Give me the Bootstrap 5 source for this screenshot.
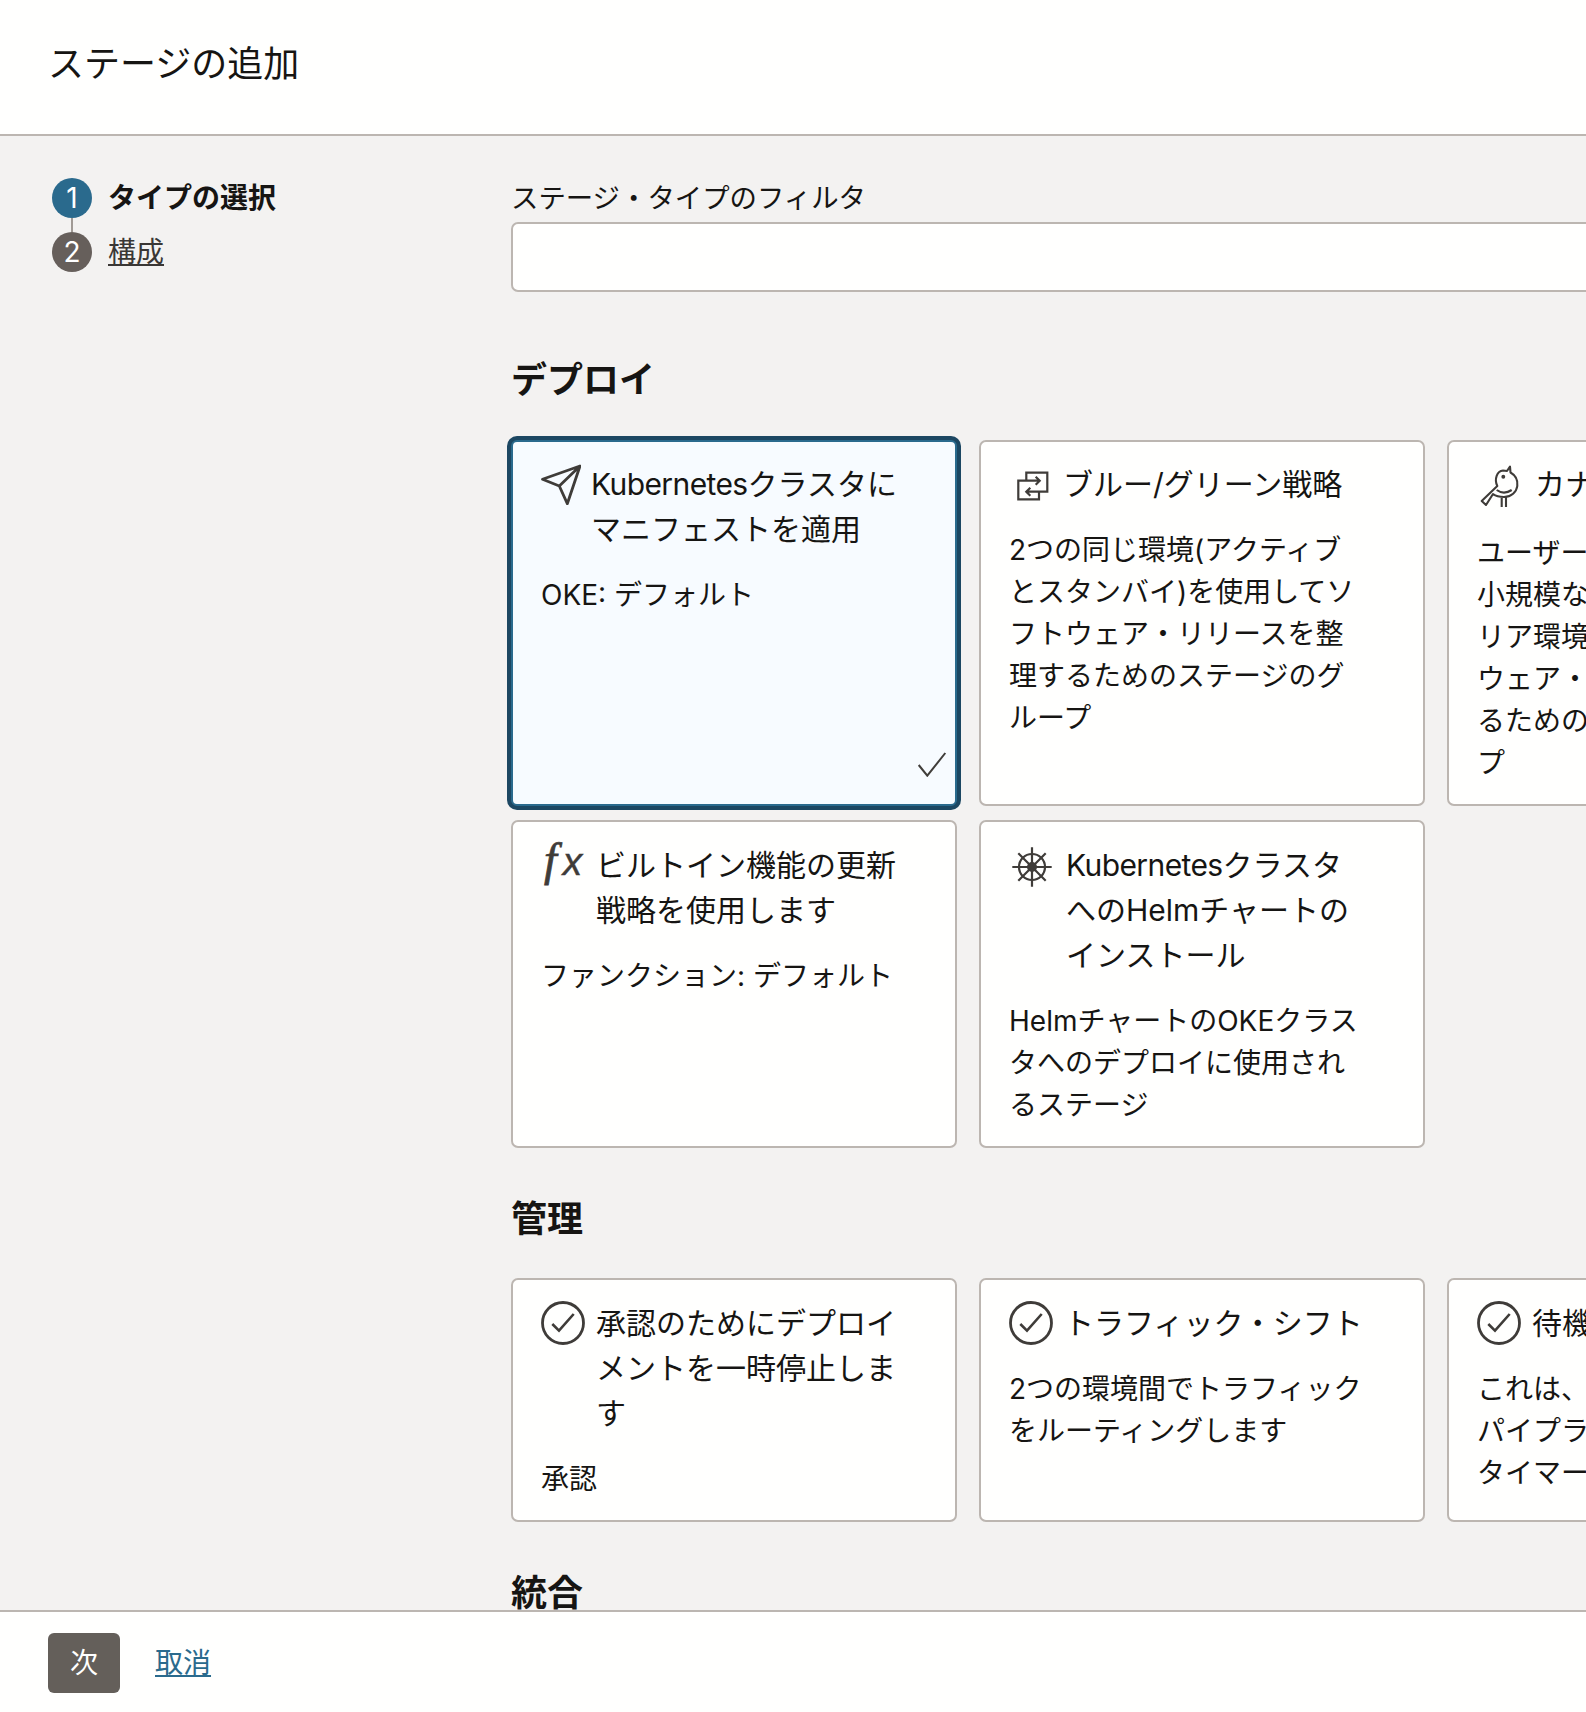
<!DOCTYPE html>
<html lang="ja">
<head>
<meta charset="utf-8">
<title>ステージの追加</title>
<link rel="stylesheet" href="https://cdn.jsdelivr.net/npm/bootstrap@5.3.0/dist/css/bootstrap.min.css">
<style>
html,body{height:100%;}
body{font-family:Inter,"Noto Sans CJK JP",sans-serif;font-weight:400;color:#161513;background:#f3f2f1;font-size:28px;line-height:42px;overflow:hidden;}
.app-shell{height:1712px;}
.page-head{height:136px;background:#fffffe;border-bottom:2px solid #bcb6b1;padding:0 48px 6px;flex-shrink:0;}
.page-head h1{font-size:36px;font-weight:400;margin:0;line-height:46px;}
.page-body{min-height:0;overflow:hidden;}
.side-steps{width:495px;flex-shrink:0;padding:42px 0 0 52px;}
.step-dot{width:40px;height:40px;color:#fff;font-size:28px;flex-shrink:0;}
.dot-on{background:#2a6a8d;}
.dot-off{background:#665f5b;}
.step-line{width:2px;height:14px;background:#a09a95;margin-left:19px;}
.step-text{margin-left:16px;line-height:40px;}
.step-text a{color:#3a3735;}
.step-now{font-weight:700;}
.main-col{min-width:0;padding:40px 0 0 16px;overflow:hidden;}
.filter-label{display:block;margin:0 0 4px;line-height:42px;font-size:27.4px;padding-top:1px;margin-bottom:3px;}
.filter-input{width:1400px;height:70px;border:2px solid #bcb6b1;border-radius:7px;background:#fffffe;margin-bottom:64px;}
.group-title{font-size:36px;font-weight:700;line-height:48px;margin:0 0 36px;}
.group-next{margin-top:47px;margin-bottom:35px;}
.stage-grid{display:grid;grid-template-columns:repeat(3,446px);column-gap:22px;row-gap:14px;}
.stage-card{background:#fffffe;border:2px solid #bcb6b1;border-radius:7px;padding:20px 28px;white-space:nowrap;}
.card-lift{padding-top:21px;}
.stage-on{background:#f7fbff;border-color:#2a6a8d;box-shadow:0 0 0 4px #1c4762;border-radius:6px;}
.stage-head{display:flex;font-size:30px;line-height:45px;margin-bottom:22px;}
.head-tall{margin-bottom:24px;}
.kube-word{letter-spacing:-.6px;}
.slot{flex-shrink:0;color:#3f3c39;}
.slot svg{display:block;fill:none;stroke:currentColor;}
.slot-send{width:50px;padding-top:2px;}
.slot-swap{width:54px;padding:9px 0 0 8px;}
.slot-bird{width:58px;padding:3px 0 0 3px;}
.slot-fx{width:55px;display:flex;align-items:baseline;margin-top:-6px;line-height:45px;font-style:italic;font-weight:400;}
.fx-f{font-family:"Liberation Serif",serif;font-size:46px;margin-left:3px;-webkit-text-stroke:.8px currentColor;}
.fx-x{font-family:"Liberation Sans",sans-serif;font-size:39px;margin-left:6px;-webkit-text-stroke:.4px currentColor;}
.slot-helm{width:57px;padding:4px 0 0 3px;}
.slot-check{width:55px;}
.done-mark{position:absolute;right:8.5px;bottom:27px;color:#403d3a;fill:none;stroke:currentColor;}
.page-foot{height:102px;background:#fffffe;border-top:2px solid #bcb6b1;padding:21px 48px 0;flex-shrink:0;}
.next-btn{width:72px;height:60px;background:#645f5a;border:0;border-radius:6px;color:#fff;font-size:28px;font-weight:400;padding:0;}
.next-btn:hover{background:#645f5a;color:#fff;}
.cancel-link{color:#2a6a8d;margin-left:35px;line-height:60px;}
</style>
</head>
<body>
<div class="app-shell d-flex flex-column">
  <header class="page-head d-flex align-items-center"><h1>ステージの追加</h1></header>
  <div class="page-body d-flex flex-grow-1">
    <nav class="side-steps">
      <div class="d-flex align-items-center">
        <span class="step-dot dot-on rounded-circle d-flex align-items-center justify-content-center">1</span>
        <span class="step-text step-now">タイプの選択</span>
      </div>
      <div class="step-line"></div>
      <div class="d-flex align-items-center">
        <span class="step-dot dot-off rounded-circle d-flex align-items-center justify-content-center">2</span>
        <span class="step-text"><a href="#">構成</a></span>
      </div>
    </nav>
    <main class="main-col flex-grow-1">
      <label class="filter-label" for="flt">ステージ・タイプのフィルタ</label>
      <input id="flt" class="form-control filter-input" type="text">

      <h2 class="group-title">デプロイ</h2>
      <div class="stage-grid">
        <div class="card stage-card stage-on">
          <div class="stage-head">
            <span class="slot slot-send"><svg width="40" height="41" viewBox="0 0 40 41" stroke-width="2.800" stroke-linejoin="round"><path d="M39 2 1.500 15.300l16.800 6.700 8 17.700zM39 2 18.300 22"/></svg></span>
            <span><span class="kube-word">Kubernetes</span>クラスタに<br>マニフェストを適用</span>
          </div>
          <div>OKE: デフォルト</div>
          <svg class="done-mark" width="30" height="26" viewBox="0 0 30 26" stroke-width="2"><path d="M1.700 14l8.600 10.700L28.300 2"/></svg>
        </div>
        <div class="card stage-card">
          <div class="stage-head">
            <span class="slot slot-swap"><svg width="32" height="30" viewBox="0 0 32 30" stroke-width="2.200"><path d="M9.300 9.700V1.700h21v19H22M22 20.700v7.600H1.300V9.700h8M9.300 9.700h13.400M18.700 5.700l4 4-4 4M22 20.700H9.300M13.300 16.700l-4 4 4 4"/></svg></span>
            <span>ブルー/グリーン戦略</span>
          </div>
          <div>2つの同じ環境(アクティブ<br>とスタンバイ)を使用してソ<br>フトウェア・リリースを整<br>理するためのステージのグ<br>ループ</div>
        </div>
        <div class="card stage-card">
          <div class="stage-head head-tall">
            <span class="slot slot-bird"><svg width="40" height="43" viewBox="0 0 40 43" stroke-width="2.100" stroke-linejoin="round"><path d="M17.300 21C14 14 17 6 23 5.500l4 .5 3-4.500.5 6C35 10 38 15 37.300 21c-.8 6-6 11-13.300 11-4.500 0-8-.8-11-3l-7 11-4.300-4zM16.700 25c4.500 3.300 10 3.300 15 0M21.700 32v10M26 32v10"/><circle cx="23.300" cy="11.700" r=".9"/></svg></span>
            <span>カナリア戦略</span>
          </div>
          <div>ユーザーのサブセットを<br>小規模なカナリア環境で<br>リア環境でソフトウェア<br>ウェア・リリースを評価す<br>るためのステージのグルー<br>プ</div>
        </div>
        <div class="card stage-card card-lift">
          <div class="stage-head">
            <span class="slot slot-fx"><span class="fx-f">f</span><span class="fx-x">x</span></span>
            <span>ビルトイン機能の更新<br>戦略を使用します</span>
          </div>
          <div>ファンクション: デフォルト</div>
        </div>
        <div class="card stage-card card-lift">
          <div class="stage-head">
            <span class="slot slot-helm"><svg width="40" height="40" viewBox="0 0 40 40" stroke-width="2.200"><circle cx="20" cy="20" r="13"/><path d="M.3 20h39.400M20 .3v39.400M6.300 6.300l27.400 27.400M33.700 6.300 6.300 33.700"/><circle cx="20" cy="20" r="3.500" stroke-width="3"/></svg></span>
            <span><span class="kube-word">Kubernetes</span>クラスタ<br>へのHelmチャートの<br>インストール</span>
          </div>
          <div>HelmチャートのOKEクラス<br>タへのデプロイに使用され<br>るステージ</div>
        </div>
      </div>

      <h2 class="group-title group-next">管理</h2>
      <div class="stage-grid">
        <div class="card stage-card card-lift">
          <div class="stage-head">
            <span class="slot slot-check"><svg width="44" height="44" viewBox="0 0 44 44" stroke-width="2.800"><circle cx="22" cy="22" r="20.500"/><path d="M11.300 23l6.700 6.700L32.700 13" stroke-width="2.600"/></svg></span>
            <span>承認のためにデプロイ<br>メントを一時停止しま<br>す</span>
          </div>
          <div>承認</div>
        </div>
        <div class="card stage-card card-lift">
          <div class="stage-head">
            <span class="slot slot-check"><svg width="44" height="44" viewBox="0 0 44 44" stroke-width="2.800"><circle cx="22" cy="22" r="20.500"/><path d="M11.300 23l6.700 6.700L32.700 13" stroke-width="2.600"/></svg></span>
            <span>トラフィック・シフト</span>
          </div>
          <div>2つの環境間でトラフィック<br>をルーティングします</div>
        </div>
        <div class="card stage-card card-lift">
          <div class="stage-head">
            <span class="slot slot-check"><svg width="44" height="44" viewBox="0 0 44 44" stroke-width="2.800"><circle cx="22" cy="22" r="20.500"/><path d="M11.300 23l6.700 6.700L32.700 13" stroke-width="2.600"/></svg></span>
            <span>待機</span>
          </div>
          <div>これは、指定された時間<br>パイプラインを停止する<br>タイマーです</div>
        </div>
      </div>

      <h2 class="group-title group-next">統合</h2>
    </main>
  </div>
  <footer class="page-foot d-flex align-items-start">
    <button class="btn next-btn" type="button">次</button>
    <a class="cancel-link" href="#">取消</a>
  </footer>
</div>
<script src="https://cdn.jsdelivr.net/npm/bootstrap@5.3.0/dist/js/bootstrap.bundle.min.js"></script>
</body>
</html>
